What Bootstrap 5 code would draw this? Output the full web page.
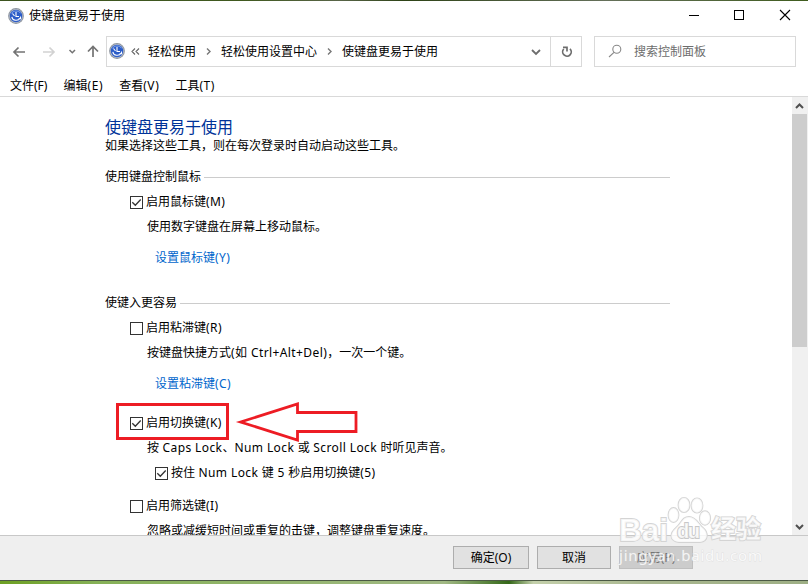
<!DOCTYPE html>
<html lang="zh-CN">
<head>
<meta charset="utf-8">
<title>使键盘更易于使用</title>
<link rel="stylesheet" href="https://cdn.jsdelivr.net/npm/bootstrap@5.3.0/dist/css/bootstrap.min.css">
<style>
body{width:808px;height:584px;overflow:hidden;background:#fff;color:#000;font:12px/20px "Noto Sans","Noto Sans CJK SC",sans-serif}
svg{display:block;flex:none}
.desk-top{height:1px;background:linear-gradient(90deg,#3d5420,#40591f 30%,#596548 42%,#2d4216 50%,#65705a 75%,#3f5c1e)}
.desk-bottom{height:4px;border-top:1px solid #4c5a45;background:linear-gradient(90deg,#6da022,#86b157 12%,#a1b984 55%,#346818 63%,#c4d0ab 66%,#a9b78f 80%,#9eaf85)}
.titlebar{height:29px;padding-left:8px;gap:5px}
.winbtn{width:46px;height:29px}
.toolbar{height:42px;padding:6px 12px 5px 0}
.navkeys{width:106px}
.address{width:476px;height:31px;border:1px solid #d9d9d9}
.refresh{width:31px;border-left:1px solid #d9d9d9}
.searchbox{width:202px;height:31px;margin-left:12px;border:1px solid #d9d9d9;color:#6d6d6d}
.menus{height:25px;border-bottom:1px solid #d9d9d9;padding:8px 0 0 10px;gap:16px}
.menus .lat{letter-spacing:.6px}
.viewport{height:438px}
.pane{padding:21px 0 0 105px}
.heading{font-size:16px;line-height:19px;color:#003399;margin:0 0 -1px;font-weight:400}
.line{height:20px;white-space:nowrap}
.rule{height:1px;background:#ccc;width:100%;margin-left:3px}
.group{width:565px}
.box{width:13px;height:13px;border:1px solid #333;margin:1px 3px 0 0;flex:none}
.opt{padding-left:25px}.desc{padding-left:42px}.task{padding-left:50px;color:#0066cc}.subopt{padding-left:50px}
.lat{letter-spacing:.4px}
.scroller{width:16px;background:#f0f0f0}
.thumb{height:233px;background:#cdcdcd;width:15px}
.footer-bar{height:45px;background:#efefef;border-top:1px solid #c8c8c8;padding:10px 115px 0 0;gap:8px}
.dlg{height:23px;border:1px solid #adadad;background:#e1e1e1;text-align:center;line-height:22px}
.dlg.off{background:#ccc;border-color:#bfbfbf;color:#757575}
.note{left:110px;top:395px}
.stamp{left:612px;top:490px}
</style>
</head>
<body class="d-flex flex-column position-relative">
<svg width="0" height="0" class="position-absolute"><defs>
<symbol id="ease" viewBox="0 0 16 16"><circle cx="8" cy="8" r="7.900" fill="#8d949e"/><circle cx="8" cy="8" r="6.900" fill="#b5bcc8"/><circle cx="8" cy="8" r="6.200" fill="#2b5cc8"/><path d="M4.500 5.500l2 2.500" stroke="#fff" stroke-width="1.100"/><path d="M3.800 8.800c.8 4 6.300 4.800 8.400 1.200M12.500 8.500v2.200h-2" fill="none" stroke="#fff" stroke-width="1.100"/><path d="M8 4v4.500h3" fill="none" stroke="#fff" stroke-width="1.100"/><path d="M3.300 5.500C5 2.500 10.500 2 12.700 5.300" fill="none" stroke="#83a7ee"/></symbol>
<symbol id="tick" viewBox="0 0 11 11"><path d="M1.300 5.300l3 3 5.400-5.800" fill="none" stroke="#333" stroke-width="1.300"/></symbol>
</defs></svg>
<div class="desk-top flex-shrink-0"></div>
<header class="titlebar d-flex align-items-center flex-shrink-0">
<svg width="16" height="16"><use href="#ease"/></svg><span class="flex-grow-1">使键盘更易于使用</span>
<div class="d-flex">
<svg class="winbtn" viewBox="0 0 46 29"><path d="M19 14.500h10" stroke="#000"/></svg>
<svg class="winbtn" viewBox="0 0 46 29"><rect x="18.500" y="9.500" width="9" height="9" fill="none" stroke="#000"/></svg>
<svg class="winbtn" viewBox="0 0 46 29"><path d="M18 9l10 10M28 9l-10 10" stroke="#000" stroke-width="1.100"/></svg>
</div>
</header>
<div class="toolbar d-flex flex-shrink-0">
<svg class="navkeys" height="31" viewBox="0 0 106 31" fill="none" stroke="#737373" stroke-width="1.700"><path d="M25 16H14M18.500 11.500L14 16l4.500 4.500"/><path d="M43 16h11M49.500 11.500L54 16l-4.500 4.500" stroke="#d2d2d2"/><path d="M69.500 14l2.800 2.800L75 14" stroke-width="1.500"/><path d="M93 21V11M88 15.500l5-5 5 5"/></svg>
<div class="address d-flex align-items-center">
<svg width="41" height="29" viewBox="0 0 41 29"><use href="#ease" x="2" y="6" width="16" height="16"/><path d="M28 11.500L25 14.500l3 3M32 11.500l-3 3 3 3" fill="none" stroke="#666" stroke-width="1.100"/></svg>
<span>轻松使用</span>
<svg width="25" height="29" viewBox="0 0 25 29"><path d="M11 11.500l3 3-3 3" fill="none" stroke="#777" stroke-width="1.400"/></svg>
<span>轻松使用设置中心</span>
<svg width="25" height="29" viewBox="0 0 25 29"><path d="M11 11.500l3 3-3 3" fill="none" stroke="#777" stroke-width="1.400"/></svg>
<span class="flex-grow-1">使键盘更易于使用</span>
<svg width="28" height="29" viewBox="0 0 28 29"><path d="M10 13l4 4 4-4" fill="none" stroke="#6d6d6d" stroke-width="1.800"/></svg>
<div class="refresh"><svg width="30" height="29" viewBox="0 0 30 29" fill="none" stroke="#6d6d6d" stroke-width="1.700"><path d="M19 11.800a4.300 4.300 0 1 1-6.300.2M12 10.300h4v4.200"/></svg></div>
</div>
<div class="searchbox d-flex align-items-center"><svg width="39" height="29" viewBox="0 0 39 29" fill="none" stroke="#888" stroke-width="1.100"><circle cx="21.800" cy="12.300" r="4"/><path d="M19 15.300L14 20"/></svg><span>搜索控制面板</span></div>
</div>
<nav class="menus d-flex flex-shrink-0 lh-1"><span>文件<span>(F)</span></span><span>编辑<span class="lat">(E)</span></span><span>查看<span class="lat">(V)</span></span><span>工具<span class="lat">(T)</span></span></nav>
<main class="viewport d-flex flex-shrink-0 overflow-hidden">
<section class="pane flex-grow-1">
<h1 class="heading">使键盘更易于使用</h1>
<div class="line">如果选择这些工具，则在每次登录时自动启动这些工具。</div>
<div class="group line d-flex align-items-center" style="margin-top:11px"><span>使用键盘控制鼠标</span><div class="rule"></div></div>
<div class="line opt d-flex align-items-center" style="margin-top:5px"><span class="box"><svg width="11" height="11"><use href="#tick"/></svg></span>启用鼠标键<span class="lat">(M)</span></div>
<div class="line desc" style="margin-top:5px">使用数字键盘在屏幕上移动鼠标。</div>
<div class="line task" style="margin-top:11px">设置鼠标键<span class="lat">(Y)</span></div>
<div class="group line d-flex align-items-center" style="margin-top:25px"><span>使键入更容易</span><div class="rule"></div></div>
<div class="line opt d-flex align-items-center" style="margin-top:5px"><span class="box"></span>启用粘滞键<span class="lat">(R)</span></div>
<div class="line desc" style="margin-top:5px">按键盘快捷方式<span class="lat">(如 Ctrl+Alt+Del)</span>，一次一个键。</div>
<div class="line task" style="margin-top:11px">设置粘滞键<span class="lat">(C)</span></div>
<div class="line opt d-flex align-items-center" style="margin-top:19px"><span class="box"><svg width="11" height="11"><use href="#tick"/></svg></span>启用切换键<span class="lat">(K)</span></div>
<div class="line desc" style="margin-top:5px">按<span class="lat"> Caps Lock</span>、<span class="lat">Num Lock </span>或<span class="lat"> Scroll Lock </span>时听见声音。</div>
<div class="line subopt d-flex align-items-center" style="margin-top:5px"><span class="box"><svg width="11" height="11"><use href="#tick"/></svg></span><span>按住<span class="lat"> Num Lock </span>键<span class="lat"> 5 </span>秒启用切换键<span class="lat">(5)</span></span></div>
<div class="line opt d-flex align-items-center" style="margin-top:13px"><span class="box"></span>启用筛选键<span class="lat">(I)</span></div>
<div class="line desc" style="margin-top:5px">忽略或减缓短时间或重复的击键，调整键盘重复速度。</div>
</section>
<aside class="scroller d-flex flex-column flex-shrink-0">
<svg width="16" height="17"><path d="M4 11l3.500-3.500L11 11" fill="none" stroke="#505050" stroke-width="2"/></svg><div class="thumb"></div>
<svg class="mt-auto" width="16" height="17"><path d="M4 7l3.500 3.500L11 7" fill="none" stroke="#505050" stroke-width="2"/></svg>
</aside>
</main>
<footer class="footer-bar d-flex justify-content-end flex-shrink-0">
<div class="dlg" style="width:76px">确定(O)</div><div class="dlg" style="width:74px">取消</div><div class="dlg off" style="width:74px">应用(P)</div>
</footer>
<div class="desk-bottom flex-shrink-0"></div>
<svg class="note position-absolute" width="260" height="50" viewBox="110 395 260 50" fill="none" stroke="#ed1c24" stroke-width="3"><rect x="117.500" y="404.500" width="110" height="34"/><path d="M240.500 422L297.500 404v8.500h58.500v19H297.500v8.500z" stroke-width="2.800"/></svg>
<svg class="stamp position-absolute" width="160" height="80" viewBox="612 490 160 80" font-family="Liberation Sans,Noto Sans CJK SC,sans-serif" font-weight="bold">
<g fill="#fff" fill-opacity=".8" stroke="#d4d4d4" stroke-width="1.800" paint-order="stroke">
<ellipse cx="673.500" cy="515" rx="5" ry="7"/><ellipse cx="684" cy="505" rx="5.500" ry="7.200"/><ellipse cx="697" cy="505.500" rx="5.500" ry="7.200"/><ellipse cx="705" cy="518" rx="5.200" ry="6.800"/>
<path d="M689 517c7 0 9 7 14 11s6 13-3 14h-21c-10-1-9-9-3-14s6-11 13-11z"/>
<text x="619" y="541" font-size="31" textLength="49" lengthAdjust="spacingAndGlyphs">Bai</text><text x="711" y="538" font-size="25" textLength="50">经验</text>
<text x="677" y="538" font-size="20" textLength="23" stroke="#c8c8c8">du</text></g>
<text x="619" y="561" font-size="15" font-weight="400" font-family="Noto Sans" textLength="143" fill="#fff" fill-opacity=".8" stroke="#d2d2d2" stroke-opacity=".5" stroke-width=".9" paint-order="stroke">jingyan.baidu.com</text>
</svg>
<script src="https://cdn.jsdelivr.net/npm/bootstrap@5.3.0/dist/js/bootstrap.bundle.min.js"></script>
</body>
</html>
